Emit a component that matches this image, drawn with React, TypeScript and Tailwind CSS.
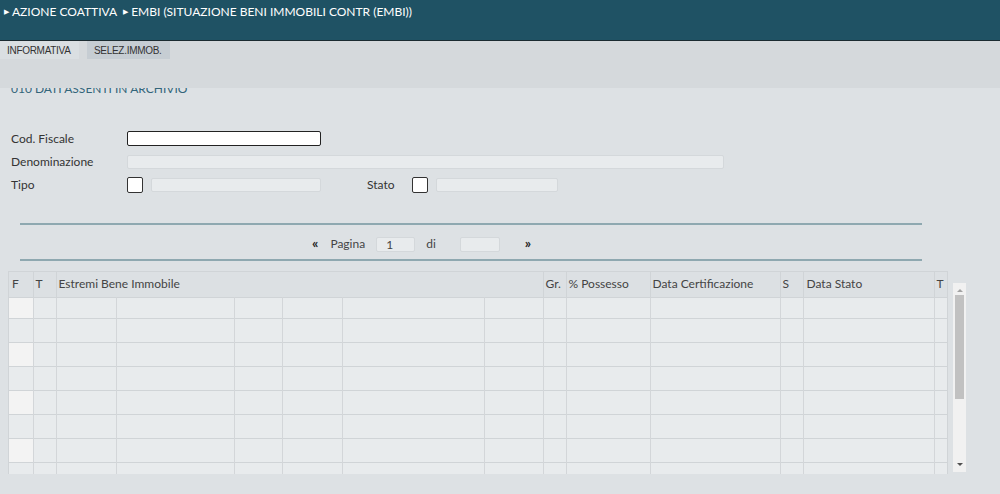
import React from 'react';

const cols = [24, 23, 60, 118, 48, 60, 142, 59, 23, 84, 130, 23, 131, 14];

function Field({ w, white }: { w: string; white?: boolean }) {
  return (
    <div
      className={
        white
          ? `${w} h-[15px] bg-white border border-[#222] rounded-[2px]`
          : `${w} h-[14px] bg-[#e8ebed] border border-[#d4d8db] rounded-[2px]`
      }
    />
  );
}

function Check() {
  return <div className="w-[16px] h-[16px] bg-white border border-[#333] rounded-[2px]" />;
}

export default function App() {
  const rows = Array.from({ length: 8 });
  return (
    <div className="w-[1000px] h-[494px] bg-[#dde1e4] overflow-hidden font-['Lato',sans-serif] text-[#333]">
      {/* header */}
      <div className="h-[41px] bg-[#1f5264] border-b border-[#1b2b31] flex items-start pt-[3px] pl-[4px] text-white text-[12px] uppercase">
        <span className="text-[7px] mt-[3px] mr-[3px]">▶</span>
        <span>Azione Coattiva</span>
        <span className="text-[7px] mt-[3px] ml-[6px] mr-[3px]">▶</span>
        <span>EMBI (Situazione Beni Immobili Contr (EMBI))</span>
      </div>

      {/* tabs + band */}
      <div className="h-[47px] bg-[#d5d9dc] font-['Liberation_Sans',sans-serif] text-[10px] tracking-[-0.3px] text-[#333]">
        <div className="flex h-[18px]">
          <div className="w-[79px] bg-[#dadfe2] flex items-center pl-[7px]">INFORMATIVA</div>
          <div className="w-[83px] ml-[8px] bg-[#c6cdd3] flex items-center pl-[7px]">SELEZ.IMMOB.</div>
        </div>
      </div>

      {/* content */}
      <div className="relative">
        <div className="h-[9px] overflow-hidden">
          <div className="-mt-[5px] pl-[11px] text-[12px] leading-[12px] text-[#33657a] uppercase">010 Dati assenti in archivio</div>
        </div>

        <div className="pl-[11px] pt-[34px] text-[12px] text-[#333]">
          <div className="flex items-center h-[15px]">
            <div className="w-[116px]">Cod. Fiscale</div>
            <Field w="w-[194px]" white />
          </div>
          <div className="flex items-center h-[14px] mt-[9px]">
            <div className="w-[116px]">Denominazione</div>
            <Field w="w-[597px]" />
          </div>
          <div className="flex items-center h-[16px] mt-[8px]">
            <div className="w-[116px]">Tipo</div>
            <Check />
            <div className="ml-[8px]">
              <Field w="w-[170px]" />
            </div>
            <div className="w-[45px] ml-[46px]">Stato</div>
            <Check />
            <div className="ml-[8px]">
              <Field w="w-[122px]" />
            </div>
          </div>
        </div>

        {/* pagination */}
        <div className="mt-[30px] ml-[20px] w-[902px] border-t-2 border-b-2 border-[#8ea8b0] h-[38px] flex items-center pt-[4px] text-[12px] text-[#444]">
          <div className="flex items-center ml-[292px]">
            <span className="font-bold text-[14px] text-[#222] -mt-[4px]">«</span>
            <span className="ml-[12px]">Pagina</span>
            <div className="ml-[11px] w-[39px] h-[15px] bg-[#e8ebed] border border-[#d4d8db] rounded-[2px] text-[12px] leading-[13px] pl-[9px]">1</div>
            <span className="ml-[11px]">di</span>
            <div className="ml-[24px] w-[40px] h-[15px] bg-[#e8ebed] border border-[#d4d8db] rounded-[2px]" />
            <span className="ml-[25px] font-bold text-[14px] text-[#222] -mt-[4px]">»</span>
          </div>
        </div>

        {/* table */}
        <div className="flex mt-[10px]">
          <div className="ml-[8px] w-[940px] h-[203px] overflow-hidden border-l border-r border-t border-[#d0d4d7]">
            <table className="border-collapse table-fixed w-[939px] text-[12px] text-[#444]">
              <colgroup>
                {cols.map((w, i) => (
                  <col key={i} style={{ width: w }} />
                ))}
              </colgroup>
              <thead>
                <tr className="h-[25px] bg-[#dce0e3] border-b border-[#d0d4d7]">
                  <th className="text-left font-normal pl-[3px] border-r border-[#d0d4d7]">F</th>
                  <th className="text-left font-normal pl-[2px] border-r border-[#d0d4d7]">T</th>
                  <th colSpan={6} className="text-left font-normal pl-[2px] border-r border-[#d0d4d7]">Estremi Bene Immobile</th>
                  <th className="text-left font-normal pl-[2px] border-r border-[#d0d4d7]">Gr.</th>
                  <th className="text-left font-normal pl-[2px] border-r border-[#d0d4d7]">% Possesso</th>
                  <th className="text-left font-normal pl-[2px] border-r border-[#d0d4d7]">Data Certificazione</th>
                  <th className="text-left font-normal pl-[2px] border-r border-[#d0d4d7]">S</th>
                  <th className="text-left font-normal pl-[3px] border-r border-[#d0d4d7]">Data Stato</th>
                  <th className="text-left font-normal pl-[2px]">T</th>
                </tr>
              </thead>
              <tbody>
                {rows.map((_, r) => (
                  <tr key={r} className={`${r === 0 ? 'h-[21px]' : 'h-[24px]'} bg-[#e8ebed] border-b border-[#d0d4d7]`}>
                    {cols.map((_, c) => (
                      <td
                        key={c}
                        className={`border-r border-[#d3d6d9] ${c === 0 && r % 2 === 0 ? 'bg-[#f3f3f3]' : ''}`}
                      />
                    ))}
                  </tr>
                ))}
              </tbody>
            </table>
          </div>

          {/* scrollbar */}
          <div className="ml-[5px] mt-[12px] w-[13px] h-[189px] bg-[#f1f1f1] flex flex-col items-center">
            <div className="w-0 h-0 mt-[6px] border-l-[3px] border-r-[3px] border-b-[3px] border-l-transparent border-r-transparent border-b-[#a3a3a3]" />
            <div className="w-[9px] h-[104px] mt-[3px] bg-[#c1c1c1]" />
            <div className="flex-1" />
            <div className="w-0 h-0 mb-[6px] border-l-[3px] border-r-[3px] border-t-[3px] border-l-transparent border-r-transparent border-t-[#505050]" />
          </div>
        </div>
      </div>
    </div>
  );
}
